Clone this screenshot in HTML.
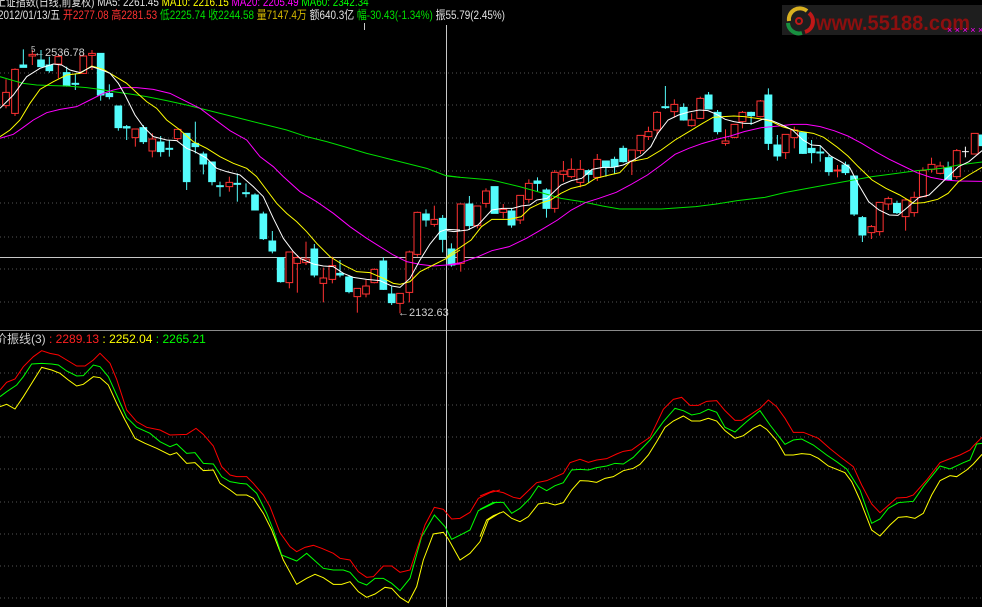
<!DOCTYPE html>
<html><head><meta charset="utf-8"><style>
html,body{margin:0;padding:0;background:#000;width:982px;height:607px;overflow:hidden}
body{position:relative;font-family:"Liberation Sans","Noto Sans CJK SC",sans-serif;font-size:12px}
.t{position:absolute;white-space:nowrap;line-height:12px}
.n{transform:scaleX(0.825);transform-origin:0 0}
svg{position:absolute;left:0;top:0}
.r line{stroke:#ff3232}.r rect{fill:#000;stroke:#ff3232}
.c line{stroke:#54fcfc}.c rect{fill:#54fcfc;stroke:#54fcfc}
line,rect,polyline{vector-effect:non-scaling-stroke;stroke-width:1}
polyline{fill:none}
</style></head><body>
<svg width="982" height="607" viewBox="0 0 982 607">
<g stroke="#555" stroke-dasharray="1,3">
<line x1="0" y1="73" x2="982" y2="73"/><line x1="0" y1="105" x2="982" y2="105"/><line x1="0" y1="138" x2="982" y2="138"/><line x1="0" y1="171" x2="982" y2="171"/><line x1="0" y1="203" x2="982" y2="203"/><line x1="0" y1="237" x2="982" y2="237"/><line x1="0" y1="269" x2="982" y2="269"/><line x1="0" y1="302" x2="982" y2="302"/>
<line x1="0" y1="373" x2="982" y2="373"/><line x1="0" y1="405" x2="982" y2="405"/><line x1="0" y1="437" x2="982" y2="437"/><line x1="0" y1="469" x2="982" y2="469"/><line x1="0" y1="502" x2="982" y2="502"/><line x1="0" y1="534" x2="982" y2="534"/><line x1="0" y1="566" x2="982" y2="566"/><line x1="0" y1="598" x2="982" y2="598"/>
</g>
<line x1="0" y1="330.5" x2="982" y2="330.5" stroke="#8a8a8a"/>
<line x1="446.5" y1="25" x2="446.5" y2="607" stroke="#c8c8c8"/>
<line x1="0" y1="257.5" x2="982" y2="257.5" stroke="#c8c8c8"/>

<g transform="translate(0,40) scale(0.33333)">
<g class="r"><line x1="18" y1="118" x2="18" y2="205"/><rect x="8" y="157" width="20" height="40"/></g>
<g class="r"><line x1="45" y1="85" x2="45" y2="228"/><rect x="35" y="88" width="20" height="132"/></g>
<g class="c"><line x1="70" y1="28" x2="70" y2="82"/><rect x="60" y="75" width="20" height="7"/></g>
<g class="r"><line x1="97" y1="30" x2="97" y2="75"/><rect x="87" y="43" width="20" height="5"/></g>
<g class="c"><line x1="123" y1="30" x2="123" y2="82"/><rect x="113" y="60" width="20" height="20"/></g>
<g class="c"><line x1="148" y1="50" x2="148" y2="98"/><rect x="138" y="75" width="20" height="17"/></g>
<g class="r"><line x1="175" y1="45" x2="175" y2="115"/><rect x="165" y="50" width="20" height="22"/></g>
<g class="c"><line x1="200" y1="80" x2="200" y2="140"/><rect x="190" y="98" width="20" height="40"/></g>
<g class="c"><line x1="226" y1="100" x2="226" y2="150"/><rect x="216" y="130" width="20" height="3"/></g>
<g class="r"><line x1="250" y1="40" x2="250" y2="102"/><rect x="240" y="48" width="20" height="52"/></g>
<g class="r"><line x1="276" y1="30" x2="276" y2="90"/><rect x="266" y="40" width="20" height="6"/></g>
<g class="c"><line x1="302" y1="40" x2="302" y2="182"/><rect x="292" y="40" width="20" height="125"/></g>
<g class="c"><line x1="328" y1="133" x2="328" y2="178"/><rect x="318" y="160" width="20" height="10"/></g>
<g class="c"><line x1="355" y1="198" x2="355" y2="272"/><rect x="345" y="198" width="20" height="65"/></g>
<g class="c"><line x1="380" y1="255" x2="380" y2="300"/><rect x="370" y="260" width="20" height="4"/></g>
<g class="r"><line x1="406" y1="267" x2="406" y2="320"/><rect x="396" y="267" width="20" height="26"/></g>
<g class="c"><line x1="430" y1="255" x2="430" y2="312"/><rect x="420" y="263" width="20" height="42"/></g>
<g class="r"><line x1="457" y1="280" x2="457" y2="352"/><rect x="447" y="297" width="20" height="36"/></g>
<g class="c"><line x1="482" y1="288" x2="482" y2="350"/><rect x="472" y="306" width="20" height="29"/></g>
<g class="c"><line x1="508" y1="300" x2="508" y2="350"/><rect x="498" y="325" width="20" height="3"/></g>
<g class="r"><line x1="533" y1="268" x2="533" y2="302"/><rect x="523" y="268" width="20" height="28"/></g>
<g class="c"><line x1="560" y1="280" x2="560" y2="450"/><rect x="550" y="280" width="20" height="145"/></g>
<g class="c"><line x1="586" y1="245" x2="586" y2="340"/><rect x="576" y="310" width="20" height="10"/></g>
<g class="c"><line x1="610" y1="335" x2="610" y2="403"/><rect x="600" y="342" width="20" height="30"/></g>
<g class="c"><line x1="636" y1="366" x2="636" y2="436"/><rect x="626" y="366" width="20" height="59"/></g>
<g class="c"><line x1="660" y1="425" x2="660" y2="470"/><rect x="650" y="437" width="20" height="3"/></g>
<g class="r"><line x1="688" y1="410" x2="688" y2="455"/><rect x="678" y="427" width="20" height="13"/></g>
<g class="c"><line x1="712" y1="400" x2="712" y2="485"/><rect x="702" y="430" width="20" height="3"/></g>
<g class="c"><line x1="738" y1="430" x2="738" y2="472"/><rect x="728" y="458" width="20" height="3"/></g>
<g class="c"><line x1="765" y1="460" x2="765" y2="510"/><rect x="755" y="465" width="20" height="45"/></g>
<g class="c"><line x1="790" y1="515" x2="790" y2="600"/><rect x="780" y="522" width="20" height="74"/></g>
<g class="c"><line x1="817" y1="573" x2="817" y2="640"/><rect x="807" y="603" width="20" height="30"/></g>
<g class="c"><line x1="842" y1="653" x2="842" y2="728"/><rect x="832" y="653" width="20" height="72"/></g>
<g class="r"><line x1="868" y1="636" x2="868" y2="745"/><rect x="858" y="636" width="20" height="92"/></g>
<g class="r"><line x1="892" y1="645" x2="892" y2="758"/><rect x="882" y="653" width="20" height="17"/></g>
<g class="r"><line x1="918" y1="605" x2="918" y2="675"/><rect x="908" y="657" width="20" height="11"/></g>
<g class="c"><line x1="943" y1="612" x2="943" y2="712"/><rect x="933" y="627" width="20" height="78"/></g>
<g class="r"><line x1="970" y1="683" x2="970" y2="787"/><rect x="960" y="714" width="20" height="16"/></g>
<g class="r"><line x1="997" y1="650" x2="997" y2="730"/><rect x="987" y="677" width="20" height="41"/></g>
<g class="c"><line x1="1020" y1="660" x2="1020" y2="712"/><rect x="1010" y="700" width="20" height="5"/></g>
<g class="c"><line x1="1047" y1="705" x2="1047" y2="760"/><rect x="1037" y="711" width="20" height="44"/></g>
<g class="r"><line x1="1072" y1="745" x2="1072" y2="818"/><rect x="1062" y="745" width="20" height="25"/></g>
<g class="r"><line x1="1098" y1="720" x2="1098" y2="772"/><rect x="1088" y="738" width="20" height="24"/></g>
<g class="r"><line x1="1123" y1="685" x2="1123" y2="730"/><rect x="1113" y="688" width="20" height="40"/></g>
<g class="c"><line x1="1150" y1="652" x2="1150" y2="750"/><rect x="1140" y="663" width="20" height="85"/></g>
<g class="c"><line x1="1175" y1="740" x2="1175" y2="795"/><rect x="1165" y="762" width="20" height="26"/></g>
<g class="r"><line x1="1200" y1="760" x2="1200" y2="820"/><rect x="1190" y="760" width="20" height="30"/></g>
<g class="r"><line x1="1228" y1="632" x2="1228" y2="787"/><rect x="1218" y="636" width="20" height="121"/></g>
<g class="r"><line x1="1252" y1="515" x2="1252" y2="650"/><rect x="1242" y="517" width="20" height="126"/></g>
<g class="c"><line x1="1278" y1="508" x2="1278" y2="560"/><rect x="1268" y="522" width="20" height="18"/></g>
<g class="r"><line x1="1303" y1="497" x2="1303" y2="560"/><rect x="1293" y="538" width="20" height="15"/></g>
<g class="c"><line x1="1328" y1="525" x2="1328" y2="637"/><rect x="1318" y="535" width="20" height="63"/></g>
</g>
<g transform="translate(440,80) scale(0.34566,0.33333)">
<g class="c"><line x1="33" y1="490" x2="33" y2="560"/><rect x="23" y="507" width="20" height="48"/></g>
<g class="r"><line x1="60" y1="372" x2="60" y2="575"/><rect x="50" y="372" width="20" height="178"/></g>
<g class="c"><line x1="85" y1="348" x2="85" y2="450"/><rect x="75" y="372" width="20" height="65"/></g>
<g class="r"><line x1="108" y1="378" x2="108" y2="445"/><rect x="98" y="378" width="20" height="59"/></g>
<g class="r"><line x1="133" y1="325" x2="133" y2="383"/><rect x="123" y="333" width="20" height="37"/></g>
<g class="c"><line x1="158" y1="320" x2="158" y2="400"/><rect x="148" y="320" width="20" height="80"/></g>
<g class="r"><line x1="183" y1="372" x2="183" y2="415"/><rect x="173" y="388" width="20" height="9"/></g>
<g class="c"><line x1="207" y1="385" x2="207" y2="443"/><rect x="197" y="393" width="20" height="42"/></g>
<g class="r"><line x1="232" y1="346" x2="232" y2="432"/><rect x="222" y="346" width="20" height="74"/></g>
<g class="r"><line x1="257" y1="298" x2="257" y2="368"/><rect x="247" y="310" width="20" height="48"/></g>
<g class="c"><line x1="282" y1="292" x2="282" y2="335"/><rect x="272" y="303" width="20" height="7"/></g>
<g class="c"><line x1="308" y1="325" x2="308" y2="413"/><rect x="298" y="330" width="20" height="55"/></g>
<g class="r"><line x1="332" y1="270" x2="332" y2="398"/><rect x="322" y="277" width="20" height="108"/></g>
<g class="r"><line x1="357" y1="243" x2="357" y2="305"/><rect x="347" y="273" width="20" height="10"/></g>
<g class="r"><line x1="380" y1="235" x2="380" y2="295"/><rect x="370" y="268" width="20" height="22"/></g>
<g class="r"><line x1="406" y1="240" x2="406" y2="322"/><rect x="396" y="268" width="20" height="39"/></g>
<g class="c"><line x1="430" y1="268" x2="430" y2="310"/><rect x="420" y="272" width="20" height="11"/></g>
<g class="r"><line x1="455" y1="222" x2="455" y2="303"/><rect x="445" y="238" width="20" height="54"/></g>
<g class="c"><line x1="480" y1="243" x2="480" y2="290"/><rect x="470" y="243" width="20" height="19"/></g>
<g class="c"><line x1="505" y1="230" x2="505" y2="282"/><rect x="495" y="238" width="20" height="22"/></g>
<g class="c"><line x1="530" y1="197" x2="530" y2="248"/><rect x="520" y="205" width="20" height="40"/></g>
<g class="r"><line x1="555" y1="210" x2="555" y2="285"/><rect x="545" y="210" width="20" height="33"/></g>
<g class="r"><line x1="580" y1="166" x2="580" y2="222"/><rect x="570" y="166" width="20" height="46"/></g>
<g class="r"><line x1="603" y1="140" x2="603" y2="180"/><rect x="593" y="155" width="20" height="15"/></g>
<g class="r"><line x1="628" y1="93" x2="628" y2="165"/><rect x="618" y="97" width="20" height="53"/></g>
<g class="c"><line x1="652" y1="18" x2="652" y2="87"/><rect x="642" y="80" width="20" height="3"/></g>
<g class="r"><line x1="678" y1="58" x2="678" y2="113"/><rect x="668" y="73" width="20" height="22"/></g>
<g class="c"><line x1="705" y1="70" x2="705" y2="122"/><rect x="695" y="82" width="20" height="38"/></g>
<g class="r"><line x1="728" y1="100" x2="728" y2="140"/><rect x="718" y="120" width="20" height="17"/></g>
<g class="r"><line x1="753" y1="50" x2="753" y2="117"/><rect x="743" y="55" width="20" height="60"/></g>
<g class="c"><line x1="777" y1="36" x2="777" y2="88"/><rect x="767" y="45" width="20" height="42"/></g>
<g class="c"><line x1="803" y1="90" x2="803" y2="163"/><rect x="793" y="97" width="20" height="58"/></g>
<g class="r"><line x1="826" y1="148" x2="826" y2="197"/><rect x="816" y="183" width="20" height="7"/></g>
<g class="r"><line x1="852" y1="132" x2="852" y2="175"/><rect x="842" y="133" width="20" height="39"/></g>
<g class="r"><line x1="875" y1="93" x2="875" y2="145"/><rect x="865" y="97" width="20" height="28"/></g>
<g class="c"><line x1="900" y1="95" x2="900" y2="135"/><rect x="890" y="97" width="20" height="10"/></g>
<g class="r"><line x1="927" y1="60" x2="927" y2="112"/><rect x="917" y="63" width="20" height="47"/></g>
<g class="c"><line x1="950" y1="25" x2="950" y2="210"/><rect x="940" y="45" width="20" height="145"/></g>
<g class="c"><line x1="976" y1="165" x2="976" y2="242"/><rect x="966" y="195" width="20" height="33"/></g>
<g class="r"><line x1="1000" y1="163" x2="1000" y2="237"/><rect x="990" y="163" width="20" height="55"/></g>
<g class="r"><line x1="1025" y1="140" x2="1025" y2="205"/><rect x="1015" y="150" width="20" height="23"/></g>
<g class="c"><line x1="1050" y1="158" x2="1050" y2="222"/><rect x="1040" y="158" width="20" height="62"/></g>
<g class="c"><line x1="1075" y1="180" x2="1075" y2="250"/><rect x="1065" y="205" width="20" height="13"/></g>
<g class="c"><line x1="1100" y1="198" x2="1100" y2="245"/><rect x="1090" y="216" width="20" height="3"/></g>
<g class="c"><line x1="1125" y1="225" x2="1125" y2="287"/><rect x="1115" y="233" width="20" height="42"/></g>
<g class="r"><line x1="1150" y1="255" x2="1150" y2="292"/><rect x="1140" y="270" width="20" height="3"/></g>
<g class="c"><line x1="1173" y1="245" x2="1173" y2="285"/><rect x="1163" y="255" width="20" height="23"/></g>
<g class="c"><line x1="1198" y1="288" x2="1198" y2="408"/><rect x="1188" y="288" width="20" height="114"/></g>
<g class="c"><line x1="1222" y1="408" x2="1222" y2="486"/><rect x="1212" y="413" width="20" height="52"/></g>
<g class="r"><line x1="1248" y1="435" x2="1248" y2="477"/><rect x="1238" y="440" width="20" height="18"/></g>
<g class="r"><line x1="1272" y1="367" x2="1272" y2="467"/><rect x="1262" y="367" width="20" height="88"/></g>
<g class="r"><line x1="1297" y1="350" x2="1297" y2="390"/><rect x="1287" y="356" width="20" height="16"/></g>
<g class="c"><line x1="1322" y1="362" x2="1322" y2="402"/><rect x="1312" y="370" width="20" height="28"/></g>
<g class="r"><line x1="1347" y1="356" x2="1347" y2="452"/><rect x="1337" y="360" width="20" height="50"/></g>
<g class="r"><line x1="1372" y1="335" x2="1372" y2="410"/><rect x="1362" y="352" width="20" height="46"/></g>
<g class="r"><line x1="1397" y1="262" x2="1397" y2="350"/><rect x="1387" y="272" width="20" height="78"/></g>
<g class="r"><line x1="1422" y1="233" x2="1422" y2="278"/><rect x="1412" y="253" width="20" height="15"/></g>
<g class="r"><line x1="1447" y1="245" x2="1447" y2="283"/><rect x="1437" y="258" width="20" height="22"/></g>
<g class="c"><line x1="1470" y1="245" x2="1470" y2="302"/><rect x="1460" y="263" width="20" height="37"/></g>
<g class="r"><line x1="1495" y1="207" x2="1495" y2="297"/><rect x="1485" y="212" width="20" height="78"/></g>
<g><line x1="1520" y1="200" x2="1520" y2="232" stroke="#fff"/><line x1="1510" y1="215" x2="1530" y2="215" stroke="#fff"/></g>
<g class="r"><line x1="1547" y1="160" x2="1547" y2="222"/><rect x="1537" y="160" width="20" height="62"/></g>
<g class="c"><line x1="1570" y1="150" x2="1570" y2="200"/><rect x="1560" y="165" width="20" height="32"/></g>
</g>

<g transform="translate(0,40) scale(0.33333)">
<polyline stroke="#00e000" points="0,110 40,122 70,130 110,135 160,137 200,138 260,143 300,148 340,155 390,162 440,170 500,182 560,195 620,210 680,225 740,240 800,255 860,270 920,290 980,305 1040,322 1100,340 1160,355 1220,370 1280,385 1340,408 1380,412"/>
<polyline stroke="#ff00ff" points="0,295 40,283 70,262 100,240 140,218 180,208 230,200 270,180 310,160 340,150 370,143 410,143 460,148 510,160 560,185 600,205 640,235 690,272 740,300 780,350 820,380 850,410 900,455 950,485 1000,520 1050,560 1100,595 1140,620 1180,645 1220,665 1260,673 1300,678 1340,675 1380,672"/>
<polyline stroke="#ffff00" points="0,290 30,270 60,240 90,190 120,148 160,125 200,105 240,100 275,78 310,88 350,112 380,130 410,158 440,185 470,205 500,240 540,270 580,305 620,325 660,350 700,370 740,385 770,410 800,450 830,490 860,520 890,545 920,575 950,610 990,650 1030,675 1070,695 1110,698 1150,715 1180,730 1200,733 1230,725 1260,695 1300,675 1340,655 1380,630"/>
<polyline stroke="#ffffff" points="0,205 40,165 80,110 120,85 160,72 185,75 210,90 240,98 275,80 300,88 330,100 355,130 375,165 405,225 430,260 460,290 500,300 530,302 560,325 585,335 620,355 650,385 680,395 720,405 760,440 790,470 820,535 850,595 880,635 900,655 940,672 970,678 1000,680 1030,700 1060,712 1100,718 1140,722 1175,738 1200,742 1230,715 1260,660 1290,612 1320,575 1340,568 1380,570"/>
</g>
<g transform="translate(440,80) scale(0.34566,0.33333)">
<polyline stroke="#00e000" points="20,287 60,292 150,300 230,320 300,340 350,355 410,365 470,378 520,387 640,387 740,380 800,372 860,362 940,352 1000,337 1100,318 1180,303 1250,290 1300,283 1380,272 1450,265 1500,255 1568,246"/>
<polyline stroke="#ff00ff" points="20,555 60,548 110,530 150,512 200,500 250,475 300,445 340,420 380,390 420,368 460,355 510,337 550,315 600,285 640,255 680,223 720,205 760,190 800,178 840,168 880,155 930,143 980,138 1020,133 1060,133 1100,140 1140,152 1180,168 1220,190 1260,215 1300,238 1340,258 1380,278 1420,292 1460,300 1500,303 1568,304"/>
<polyline stroke="#ffff00" points="20,530 40,515 90,480 120,440 150,418 200,418 235,410 260,385 290,370 320,360 350,340 380,325 420,315 450,295 490,285 520,278 550,245 600,235 640,210 680,180 720,155 760,130 790,112 820,110 850,108 880,110 930,117 960,125 990,140 1030,152 1080,160 1110,172 1150,202 1180,228 1210,260 1250,300 1290,325 1330,345 1370,370 1400,368 1440,358 1470,340 1500,305 1530,285 1568,262"/>
<polyline stroke="#ffffff" points="20,452 40,455 80,450 110,435 150,390 180,385 210,385 235,378 260,375 280,360 310,355 330,335 350,315 380,302 410,295 440,268 470,262 500,262 530,255 560,240 585,225 610,200 630,160 660,120 690,105 720,96 750,90 775,92 800,103 825,118 850,125 880,130 905,130 935,117 960,122 990,135 1020,150 1050,180 1075,195 1100,197 1130,228 1160,245 1185,262 1210,312 1240,365 1270,390 1300,405 1325,406 1355,380 1385,353 1415,345 1440,320 1470,290 1500,260 1530,245 1568,212"/>
</g>

<g transform="translate(0,340) scale(0.33333)">
<polyline stroke="#ffff00" points="0,200 20,193 45,207 70,170 95,130 125,82 155,90 180,100 205,120 230,138 250,133 280,110 300,113 325,135 350,190 375,240 405,295 435,310 470,325 510,345 530,338 560,370 585,368 610,392 640,390 660,430 690,450 710,465 740,465 760,475 790,520 815,570 850,660 890,733 920,715 945,703 970,713 1000,733 1025,733 1050,725 1075,755 1100,772 1125,762 1155,742 1175,745 1200,772 1225,788 1250,740 1270,660 1300,582 1330,577 1345,597 1380,660 1410,640 1440,605 1465,540 1500,518"/>
<polyline stroke="#00ff00" points="0,170 20,155 50,135 70,110 95,72 125,70 155,72 175,75 200,93 230,108 250,107 280,75 300,80 325,110 350,165 380,232 410,262 450,280 480,305 510,320 530,312 560,340 585,338 610,370 640,372 665,410 690,425 720,430 740,432 770,460 800,520 820,570 845,645 890,663 920,640 970,685 1000,690 1030,690 1050,697 1075,725 1100,735 1125,715 1150,715 1175,730 1200,752 1230,715 1265,590 1303,525 1335,560 1355,598 1385,583 1410,570 1435,512 1470,495 1485,488 1500,487"/>
<polyline stroke="#ff0000" points="0,150 20,127 45,117 70,80 100,50 125,32 150,40 175,45 200,60 230,78 255,78 280,60 300,40 330,70 350,118 380,210 410,245 440,262 480,270 510,285 560,283 588,265 610,283 640,318 665,380 690,405 710,410 740,410 760,430 790,465 810,500 840,578 870,620 890,635 915,622 940,616 965,625 1000,640 1020,655 1050,660 1075,695 1100,712 1120,710 1150,678 1175,678 1200,697 1230,690 1275,555 1303,502 1330,508 1355,537 1380,535 1410,517 1435,475 1470,458 1500,450"/>
</g>
<g transform="translate(480,340) scale(0.33333)">
<polyline stroke="#ffff00" points="0,590 20,540 40,527 70,515 95,535 120,545 145,530 175,492 200,488 225,495 250,488 275,450 300,422 325,423 350,427 375,415 400,410 430,392 460,385 480,373 505,345 530,305 555,262 580,243 610,228 635,243 660,243 685,235 710,243 735,272 765,295 790,287 820,265 840,255 860,268 890,302 915,345 940,345 965,341 990,343 1015,355 1045,378 1070,388 1095,398 1115,425 1140,480 1175,570 1200,588 1230,555 1255,532 1280,530 1305,535 1330,520 1355,465 1380,422 1410,407 1430,410 1460,390 1480,372 1506,343"/>
<polyline stroke="#00ff00" points="0,508 40,487 70,487 95,520 120,505 150,475 175,438 200,452 225,437 250,428 275,390 300,388 325,390 350,383 380,378 405,370 430,372 460,352 510,300 550,245 585,205 610,212 635,225 660,220 685,208 710,217 735,262 765,276 800,245 840,212 870,255 915,313 940,300 965,297 1000,315 1040,345 1070,365 1100,387 1140,450 1175,550 1200,537 1225,505 1255,488 1300,484 1330,440 1380,378 1410,387 1450,368 1470,360 1490,312 1506,310"/>
<polyline stroke="#ff0000" points="0,468 40,452 70,458 100,472 120,476 170,428 200,422 250,400 270,368 300,358 325,367 350,360 380,356 410,342 430,334 455,330 480,312 510,292 550,208 580,178 605,172 630,196 655,196 680,184 710,182 735,212 765,241 785,241 840,205 865,180 890,200 915,235 940,277 970,277 1015,295 1050,326 1080,350 1120,380 1145,435 1175,492 1200,518 1250,474 1280,472 1300,465 1340,420 1380,368 1400,360 1440,345 1470,330 1480,318 1506,292"/>
</g>

<rect x="782" y="5" width="200" height="30" fill="#1e1e1e"/>
<g fill="none" stroke-width="4">
<path d="M789 21 A11 11 0 0 1 807 11" stroke="#d8b020"/>
<path d="M809 13 A11 11 0 0 1 805 32" stroke="#c01818"/>
<path d="M802 33 A11 11 0 0 1 788 23" stroke="#189040"/>
<circle cx="799" cy="21" r="3" stroke="#c01818" stroke-width="2"/>
</g>
<text x="816" y="30" font-family="Liberation Sans, sans-serif" font-weight="bold" font-size="21" fill="#8c0f0f" textLength="154" lengthAdjust="spacingAndGlyphs">www.55188.com</text>
<text x="947" y="33" font-family="Liberation Sans, sans-serif" font-size="9" fill="#ff00ff">× × × × ×</text>
<line x1="364.5" y1="23" x2="364.5" y2="30" stroke="#c8c8c8"/>
</svg>

<div class="t n" style="left:-4px;top:-4px;color:#e0e0e0">上证指数(日线,前复权) MA5: 2261.45 <span style="color:#ffff00">MA10: 2216.15</span> <span style="color:#ff00ff">MA20: 2205.49</span> <span style="color:#00ff00">MA60: 2342.34</span></div>
<div class="t n" style="left:-2px;top:9px;color:#e0e0e0">2012/01/13/五 <span style="color:#ff3232">开2277.08 高2281.53</span> <span style="color:#00e000">低2225.74 收2244.58</span> <span style="color:#d4b800">量7147.4万</span> 额640.3亿 <span style="color:#00e000">幅-30.43(-1.34%)</span> 振55.79(2.45%)</div>
<div class="t" style="left:34px;top:47px;color:#d0d0d0;font-size:11px">←2536.78</div>
<div class="t" style="left:31px;top:44px;color:#d0d0d0;font-size:8px">5</div>
<div class="t" style="left:398px;top:307px;color:#d0d0d0;font-size:11px">←2132.63</div>
<div class="t" style="left:-5px;top:333px;color:#d0d0d0">价振线(3) <span style="color:#ff2020">: 2289.13</span> <span style="color:#ffff00">: 2252.04</span> <span style="color:#00ff00">: 2265.21</span></div>
</body></html>
